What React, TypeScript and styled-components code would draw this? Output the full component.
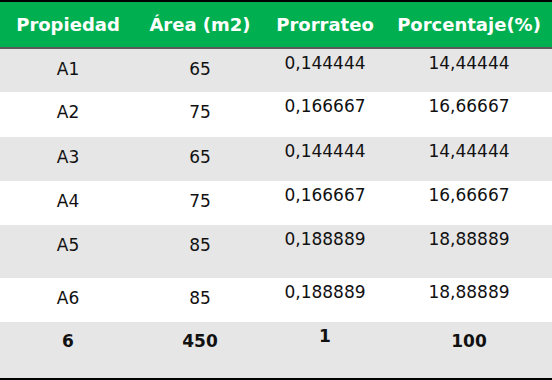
import React, { FC } from 'react';
import styled, { createGlobalStyle } from 'styled-components';

const GlobalStyle = createGlobalStyle`
  html, body {
    margin: 0;
    padding: 0;
    background: #ffffff;
  }
  body {
    font-family: 'DejaVu Sans', 'Liberation Sans', sans-serif;
  }
`;

const Table = styled.table`
  width: 552px;
  border-collapse: collapse;
  table-layout: fixed;
  border-top: 2px solid #000;
  border-bottom: 3px solid #000;
  color: #111;
`;

const HeadRow = styled.tr`
  background: #00b050;
  border-bottom: 2px solid #5a5a5a;
`;

const HeadCell = styled.th<{ $w: number }>`
  width: ${(p) => p.$w}px;
  height: 45px;
  padding: 0;
  color: #fff;
  font-size: 18px;
  font-weight: bold;
  text-align: center;
  vertical-align: middle;
`;

const Row = styled.tr<{ $shade: boolean; $h: number }>`
  background: ${(p) => (p.$shade ? '#e6e6e6' : '#ffffff')};
  height: ${(p) => p.$h}px;
`;

const Cell = styled.td<{ $top: number; $bold?: boolean }>`
  padding: ${(p) => p.$top}px 0 0;
  font-size: 17px;
  font-weight: ${(p) => (p.$bold ? 'bold' : 'normal')};
  text-align: center;
  vertical-align: top;
  line-height: 18px;
`;

const cols = [136, 128, 122, 166];

const rows = [
  ['A1', '65', '0,144444', '14,44444'],
  ['A2', '75', '0,166667', '16,66667'],
  ['A3', '65', '0,144444', '14,44444'],
  ['A4', '75', '0,166667', '16,66667'],
  ['A5', '85', '0,188889', '18,88889'],
  ['A6', '85', '0,188889', '18,88889'],
];

const heights = [44, 45, 44, 44, 53, 44];

const App: FC = () => (
  <>
    <GlobalStyle />
    <Table>
      <thead>
        <HeadRow>
          <HeadCell $w={cols[0]}>Propiedad</HeadCell>
          <HeadCell $w={cols[1]}>Área (m2)</HeadCell>
          <HeadCell $w={cols[2]}>Prorrateo</HeadCell>
          <HeadCell $w={cols[3]}>Porcentaje(%)</HeadCell>
        </HeadRow>
      </thead>
      <tbody>
        {rows.map((r, i) => (
          <Row key={r[0]} $shade={i % 2 === 0} $h={heights[i]}>
            <Cell $top={11}>{r[0]}</Cell>
            <Cell $top={11}>{r[1]}</Cell>
            <Cell $top={5}>{r[2]}</Cell>
            <Cell $top={5}>{r[3]}</Cell>
          </Row>
        ))}
        <Row $shade $h={57}>
          <Cell $top={10} $bold>6</Cell>
          <Cell $top={10} $bold>450</Cell>
          <Cell $top={5} $bold>1</Cell>
          <Cell $top={10} $bold>100</Cell>
        </Row>
      </tbody>
    </Table>
  </>
);

export default App;
